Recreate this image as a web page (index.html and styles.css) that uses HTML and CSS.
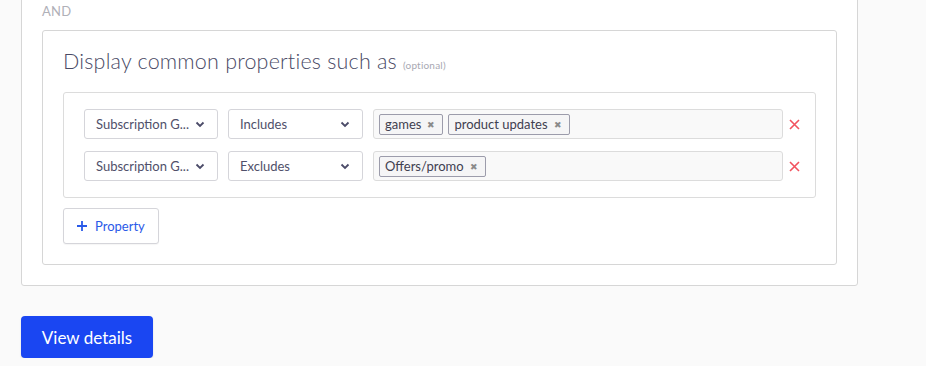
FILE: index.html
```html
<!DOCTYPE html>
<html>
<head>
<meta charset="utf-8">
<link rel="stylesheet" href="styles.css">
</head>
<body>
<div class="page">
  <div class="outer-card">
    <div class="and-label">AND</div>
    <div class="inner-card">
      <div class="title">Display common properties such as <span class="optional">(optional)</span></div>
      <div class="prop-box">
        <div class="prop-row">
          <div class="select sel-field"><span class="sel-text">Subscription G...</span><svg class="chev" width="10" height="7" viewBox="0 0 10 7"><path d="M1.5 1.5 L5 5 L8.5 1.5" fill="none" stroke="#4b4b68" stroke-width="1.8"/></svg></div>
          <div class="select sel-op"><span class="sel-text">Includes</span><svg class="chev" width="10" height="7" viewBox="0 0 10 7"><path d="M1.5 1.5 L5 5 L8.5 1.5" fill="none" stroke="#4b4b68" stroke-width="1.8"/></svg></div>
          <div class="tagbox">
            <span class="tag">games<span class="tag-x">✖</span></span>
            <span class="tag">product updates<span class="tag-x">✖</span></span>
          </div>
          <div class="remove"><svg width="11" height="11" viewBox="0 0 11 11"><path d="M1 1 L10 10 M10 1 L1 10" stroke="#f2525e" stroke-width="1.6"/></svg></div>
        </div>
        <div class="prop-row">
          <div class="select sel-field"><span class="sel-text">Subscription G...</span><svg class="chev" width="10" height="7" viewBox="0 0 10 7"><path d="M1.5 1.5 L5 5 L8.5 1.5" fill="none" stroke="#4b4b68" stroke-width="1.8"/></svg></div>
          <div class="select sel-op"><span class="sel-text">Excludes</span><svg class="chev" width="10" height="7" viewBox="0 0 10 7"><path d="M1.5 1.5 L5 5 L8.5 1.5" fill="none" stroke="#4b4b68" stroke-width="1.8"/></svg></div>
          <div class="tagbox">
            <span class="tag">Offers/promo<span class="tag-x">✖</span></span>
          </div>
          <div class="remove"><svg width="11" height="11" viewBox="0 0 11 11"><path d="M1 1 L10 10 M10 1 L1 10" stroke="#f2525e" stroke-width="1.6"/></svg></div>
        </div>
      </div>
      <button class="add-btn"><svg width="12" height="12" viewBox="0 0 12 12"><path d="M6 1 V11 M1 6 H11" stroke="#2a5ae8" stroke-width="1.8"/></svg><span>Property</span></button>
    </div>
  </div>
  <button class="primary-btn">View details</button>
</div>
</body>
</html>
```

FILE: styles.css
```css
* { box-sizing: border-box; }
html, body { margin: 0; padding: 0; }
body {
  background: #fafafa;
  font-family: Lato, "Open Sans", sans-serif;
  color: #4a4a65;
  overflow: hidden;
}
.page {
  padding-left: 21px;
}
.outer-card {
  width: 837px;
  margin-top: -20px;
  background: #fff;
  border: 1px solid #d6d6d6;
  border-radius: 3px;
  padding: 21px 20px 20px 20px;
}
.and-label {
  font-size: 13px;
  line-height: 18px;
  color: #b0b0b8;
  margin-bottom: 10px;
  letter-spacing: 0.2px;
}
.inner-card {
  border: 1px solid #d6d6d6;
  border-radius: 3px;
  padding: 17px 20px 20px 20px;
}
.title {
  font-size: 21.5px;
  font-weight: 300;
  line-height: 26px;
  color: #4a4a65;
  margin-bottom: 14px;
  letter-spacing: 0.2px;
}
.optional {
  font-size: 10px;
  font-weight: 400;
  color: #a8a8b2;
}
.prop-box {
  border: 1px solid #dcdcdc;
  border-radius: 3px;
  padding: 16px 10px 16px 20px;
  display: flex;
  flex-direction: column;
  gap: 12px;
}
.prop-row {
  display: flex;
  align-items: center;
  height: 30px;
}
.select {
  height: 30px;
  border: 1px solid #d5d5da;
  border-radius: 3px;
  background: #fff;
  display: flex;
  align-items: center;
  justify-content: space-between;
  padding: 0 12px 0 11px;
  font-size: 13px;
  color: #50506a;
  margin-right: 10px;
}
.sel-field { width: 134px; }
.sel-op { width: 135px; }
.tagbox {
  flex: 1;
  height: 30px;
  border: 1px solid #dcdcdc;
  border-radius: 3px;
  background: #f9f9f9;
  display: flex;
  align-items: center;
  gap: 5px;
  padding: 0 5px;
}
.tag {
  height: 21px;
  border: 1px solid #9c9cab;
  border-radius: 2px;
  background: #f5f5f6;
  display: inline-flex;
  align-items: center;
  padding: 0 7px 0 5px;
  font-size: 13px;
  color: #40404f;
}
.tag-x {
  font-size: 9px;
  color: #8a8a8a;
  margin-left: 6px;
}
.remove {
  width: 22px;
  display: flex;
  justify-content: center;
  align-items: center;
}
.add-btn {
  margin-top: 10px;
  width: 96px;
  height: 36px;
  border: 1px solid #d5d5da;
  border-radius: 3px;
  background: #fff;
  display: flex;
  align-items: center;
  gap: 7px;
  padding: 0 0 0 12px;
  font-family: inherit;
  font-size: 13px;
  color: #2a5ae8;
  box-shadow: 0 1px 1px rgba(0,0,0,0.04);
}
.primary-btn {
  margin-top: 30px;
  width: 132px;
  height: 42px;
  border: none;
  border-radius: 4px;
  background: #1a46f2;
  color: #fff;
  font-family: inherit;
  font-size: 17px;
  box-shadow: 0 1px 2px rgba(0,0,0,0.12);
}
```
